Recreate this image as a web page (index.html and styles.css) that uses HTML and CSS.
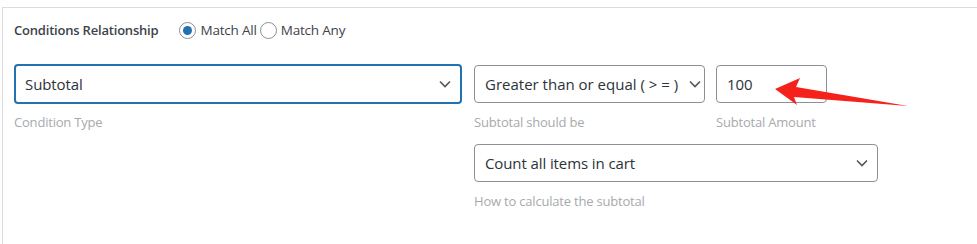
FILE: index.html
```html
<!DOCTYPE html>
<html>
<head>
<meta charset="utf-8">
<link rel="stylesheet" href="styles.css">
</head>
<body>
<div class="panel">
  <div class="relation">
    <span class="relation-title">Conditions Relationship</span>
    <label class="radio"><span class="radio-dot checked"></span><span>Match All</span></label>
    <label class="radio"><span class="radio-dot"></span><span>Match Any</span></label>
  </div>
  <div class="conditions">
    <div class="field field-type">
      <div class="select focused">
        <span>Subtotal</span>
        <svg class="chev" width="12" height="8" viewBox="0 0 12 8"><path d="M1 1.5 L6 6.5 L11 1.5" fill="none" stroke="#50575e" stroke-width="1.6"/></svg>
      </div>
      <div class="desc">Condition Type</div>
    </div>
    <div class="right">
      <div class="right-row">
        <div class="field field-op">
          <div class="select">
            <span>Greater than or equal ( &gt; = )</span>
            <svg class="chev" width="12" height="8" viewBox="0 0 12 8"><path d="M1 1.5 L6 6.5 L11 1.5" fill="none" stroke="#50575e" stroke-width="1.6"/></svg>
          </div>
          <div class="desc">Subtotal should be</div>
        </div>
        <div class="field field-amount">
          <div class="input">100</div>
          <div class="desc">Subtotal Amount</div>
        </div>
      </div>
      <div class="field field-calc">
        <div class="select">
          <span>Count all items in cart</span>
          <svg class="chev" width="12" height="8" viewBox="0 0 12 8"><path d="M1 1.5 L6 6.5 L11 1.5" fill="none" stroke="#50575e" stroke-width="1.6"/></svg>
        </div>
        <div class="desc">How to calculate the subtotal</div>
      </div>
    </div>
  </div>
</div>
<svg class="arrow" width="977" height="244" viewBox="0 0 977 244">
  <polygon points="775,89 800,78 796,87 908,106 794,97 797,105" fill="#f5221b"/>
</svg>
</body>
</html>
```
FILE: styles.css
```css
html, body {
  margin: 0;
  padding: 0;
  background: #fff;
}
body {
  font-family: "Open Sans", "Noto Sans", sans-serif;
  color: #2c3338;
  width: 977px;
  height: 244px;
  overflow: hidden;
  position: relative;
}
.panel {
  margin: 7px 0 0 2px;
  border-top: 1px solid #dcdcde;
  border-left: 1px solid #dcdcde;
  padding: 11px 0 0 11px;
  height: 225px;
}
.relation {
  display: flex;
  align-items: center;
  height: 22px;
  font-size: 13px;
}
.relation-title {
  font-weight: 600;
  color: #3c434a;
  margin-right: 21px;
  letter-spacing: -0.2px;
}
.radio {
  display: flex;
  align-items: center;
  color: #3c434a;
  font-size: 13.5px;
  letter-spacing: -0.2px;
}
.radio + .radio {
  margin-left: 3px;
}
.radio-dot {
  width: 17px;
  height: 17px;
  box-sizing: border-box;
  border: 1px solid #8c8f94;
  border-radius: 50%;
  margin-right: 4px;
  display: flex;
  align-items: center;
  justify-content: center;
}
.radio-dot.checked::after {
  content: "";
  width: 9px;
  height: 9px;
  border-radius: 50%;
  background: #2271b1;
}
.conditions {
  display: flex;
  margin-top: 24px;
  gap: 12px;
}
.field {
  display: flex;
  flex-direction: column;
}
.field-type {
  width: 448px;
}
.right {
  display: flex;
  flex-direction: column;
  gap: 13px;
}
.right-row {
  display: flex;
  gap: 11px;
}
.field-op {
  width: 231px;
}
.field-amount {
  width: 111px;
}
.field-calc {
  width: 404px;
}
.select, .input {
  box-sizing: border-box;
  height: 38px;
  border: 1px solid #8c8f94;
  border-radius: 4px;
  display: flex;
  align-items: center;
  justify-content: space-between;
  padding: 0 5px 0 10px;
  font-size: 15px;
  color: #2c3338;
  letter-spacing: -0.1px;
  background: #fff;
  white-space: nowrap;
}
.select.focused {
  height: 40px;
  border: 2px solid #2271b1;
  margin-top: -1px;
  padding-left: 9px;
  padding-right: 5px;
}
.field-op .select {
  letter-spacing: 0;
  padding-right: 3px;
}
.chev {
  flex: none;
  margin-right: 4px;
}
.field-op .chev {
  margin-right: 0;
}
.input {
  justify-content: flex-start;
}
.desc {
  font-size: 13px;
  color: #a7aaad;
  margin-top: 10px;
  line-height: 18px;
  letter-spacing: -0.2px;
}
.field-type .desc {
  margin-top: 9px;
}
.arrow {
  position: absolute;
  left: 0;
  top: 0;
  pointer-events: none;
}
```
